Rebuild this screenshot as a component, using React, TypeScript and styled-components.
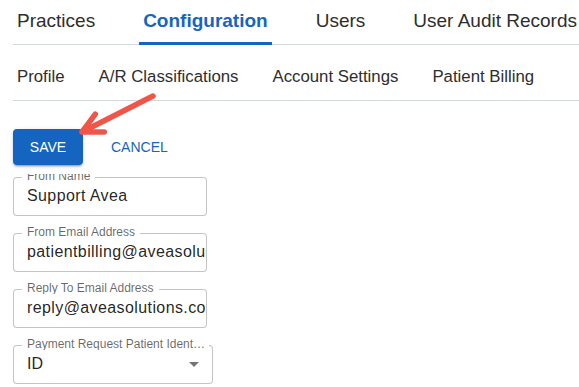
import styled, { createGlobalStyle } from "styled-components";

const BLUE = "#1565c0";

const GlobalStyle = createGlobalStyle`
    html, body {
        margin: 0;
        padding: 0;
        background: #ffffff;
        overflow: hidden;
    }
    body {
        font-family: "Liberation Sans", Arial, sans-serif;
        color: rgba(0, 0, 0, 0.87);
    }
`;

interface TabProps {
    $active?: boolean;
}

const topTabs: string[] = ["Practices", "Configuration", "Users", "User Audit Records"];
const subTabs: string[] = ["Profile", "A/R Classifications", "Account Settings", "Patient Billing"];

const fields = [
    { label: "From Name", value: "Support Avea" },
    { label: "From Email Address", value: "patientbilling@aveasolutions.com" },
    { label: "Reply To Email Address", value: "reply@aveasolutions.com" },
];

export default function App() {
    return (
        <Page>
            <GlobalStyle />
            <TopTabs>
                {topTabs.map(function (t: string) {
                    return <TopTab key={t} $active={t === "Configuration"}>{t}</TopTab>;
                })}
            </TopTabs>
            <SubTabs>
                {subTabs.map(function (t: string) {
                    return <SubTab key={t}>{t}</SubTab>;
                })}
            </SubTabs>
            <ButtonRow>
                <SaveButton>SAVE</SaveButton>
                <CancelButton>CANCEL</CancelButton>
            </ButtonRow>
            <FormViewport>
                <Form>
                    {fields.map(function (f) {
                        return (
                            <Field key={f.label}>
                                <FieldLabel>{f.label}</FieldLabel>
                                <FieldInput readOnly defaultValue={f.value} />
                            </Field>
                        );
                    })}
                    <SelectField>
                        <SelectLabel>Payment Request Patient Identifier</SelectLabel>
                        <SelectValue>ID</SelectValue>
                        <DropIcon viewBox="0 0 24 24">
                            <path d="M7 10l5 5 5-5z" />
                        </DropIcon>
                    </SelectField>
                </Form>
            </FormViewport>
            {/* annotation arrow pointing at the save button */}
            <Pointer viewBox="0 0 95 55" width="95" height="55">
                <g stroke="#ef5548" strokeWidth="5.5" strokeLinecap="round" strokeLinejoin="round" fill="none">
                    <line x1="83" y1="11" x2="14" y2="46" />
                    <polyline points="25.3,29.1 12,47 34.3,46.9" />
                </g>
            </Pointer>
        </Page>
    );
}

const Page = styled.div`
    position: relative;
    width: 579px;
    height: 387px;
    overflow: hidden;
`;

const TopTabs = styled.div`
    display: flex;
    align-items: flex-start;
    gap: 40px;
    margin-left: 13px;
    border-bottom: 1px solid #d3d8db;
    white-space: nowrap;
`;

const TopTab = styled.div<TabProps>`
    box-sizing: border-box;
    height: 45px;
    margin-bottom: -1px;
    padding: 10px 4px 0;
    font-size: 19px;
    line-height: 22px;
    font-weight: ${(p) => (p.$active ? 700 : 400)};
    color: ${(p) => (p.$active ? BLUE : "#2e2e2e")};
    border-bottom: 3px solid ${(p) => (p.$active ? BLUE : "transparent")};
`;

const SubTabs = styled.div`
    display: flex;
    gap: 34px;
    margin-left: 13px;
    padding: 22px 0 14px 4px;
    border-bottom: 1px solid #d3d8db;
    white-space: nowrap;
`;

const SubTab = styled.div`
    font-size: 16.8px;
    line-height: 19px;
    color: #2e2e2e;
`;

const ButtonRow = styled.div`
    display: flex;
    align-items: center;
    gap: 12px;
    margin: 28px 0 0 13px;
`;

const SaveButton = styled.button`
    box-sizing: border-box;
    width: 70px;
    height: 36px;
    padding: 0;
    border: none;
    border-radius: 4px;
    background: ${BLUE};
    color: #ffffff;
    font-family: "Liberation Sans", Arial, sans-serif;
    font-size: 14px;
    box-shadow: 0 3px 1px -2px rgba(0, 0, 0, 0.2), 0 2px 2px rgba(0, 0, 0, 0.14), 0 1px 5px rgba(0, 0, 0, 0.12);
`;

const CancelButton = styled.button`
    height: 36px;
    padding: 0 16px;
    border: none;
    background: transparent;
    color: ${BLUE};
    font-family: "Liberation Sans", Arial, sans-serif;
    font-size: 14px;
`;

const FormViewport = styled.div`
    margin-top: 9px;
    overflow: hidden;
`;

const Form = styled.div`
    display: flex;
    flex-direction: column;
    align-items: flex-start;
    gap: 17px;
    padding: 3px 0 0 13px;
`;

const Field = styled.div`
    position: relative;
    box-sizing: border-box;
    width: 194px;
    height: 39px;
    border: 1px solid rgba(0, 0, 0, 0.23);
    border-radius: 4px;
    background: #ffffff;
`;

const SelectField = styled(Field)`
    width: 200px;
`;

const FieldLabel = styled.span`
    position: absolute;
    top: -8px;
    left: 8px;
    max-width: 176px;
    padding: 0 5px;
    background: #ffffff;
    font-size: 12px;
    line-height: 12px;
    color: rgba(0, 0, 0, 0.6);
    white-space: nowrap;
    overflow: hidden;
    text-overflow: ellipsis;
`;

const SelectLabel = styled(FieldLabel)`
    max-width: 179px;
    padding-right: 3px;
`;

const FieldInput = styled.input`
    box-sizing: border-box;
    width: 100%;
    height: 100%;
    padding: 8px 1px 10px 13px;
    border: none;
    outline: none;
    background: transparent;
    font-family: "Liberation Sans", Arial, sans-serif;
    font-size: 16px;
    line-height: 19px;
    letter-spacing: 0.4px;
    color: rgba(0, 0, 0, 0.87);
`;

const SelectValue = styled.div`
    padding: 8px 0 0 13px;
    font-size: 16px;
    line-height: 19px;
    color: rgba(0, 0, 0, 0.87);
`;

const DropIcon = styled.svg`
    position: absolute;
    right: 6px;
    top: 6px;
    width: 24px;
    height: 24px;
    fill: rgba(0, 0, 0, 0.54);
`;

const Pointer = styled.svg`
    position: absolute;
    left: 70px;
    top: 85px;
    pointer-events: none;
`;
